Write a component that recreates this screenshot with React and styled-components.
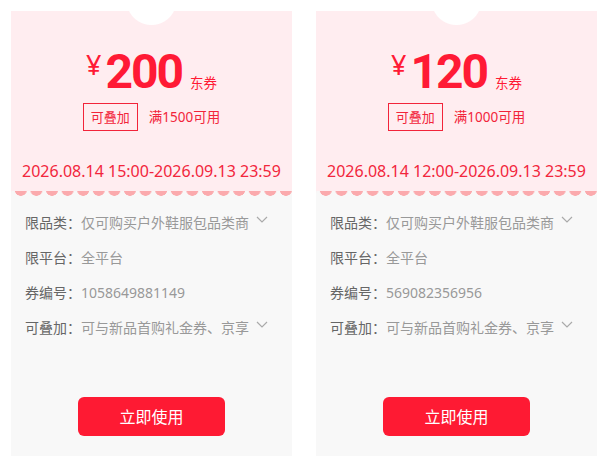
import React from "react";
import styled, { createGlobalStyle } from "styled-components";

const Global = createGlobalStyle`
  html, body { margin: 0; padding: 0; background: #fff; overflow: hidden; }
  body { font-family: "Noto Sans", "Noto Sans CJK SC", sans-serif; }
`;

const Page = styled.div`
  display: flex;
  gap: 24px;
  padding: 11px 0 0 11px;
  width: 600px;
  height: 456px;
  box-sizing: border-box;
`;

const Card = styled.div`
  width: 281px;
  flex: none;
  display: flex;
  flex-direction: column;
  height: 445px;
  background: #f8f8f8;
`;

const Header = styled.div`
  height: 180px;
  box-sizing: border-box;
  padding: 37px 0 10px;
  display: flex;
  flex-direction: column;
  align-items: center;
  background: radial-gradient(circle at 50% -11px, #fff 24.5px, #ffedf0 25.5px);
`;

const AmountRow = styled.div`
  display: flex;
  align-items: baseline;
  justify-content: center;
  height: 48px;
  color: #ff1a35;
`;

const Yen = styled.span`
  align-self: flex-start;
  margin-top: 3px;
  margin-right: 4px;
  font-family: "Noto Sans", sans-serif;
  font-size: 27px;
  line-height: 27px;
`;

const Amount = styled.span`
  font-family: Roboto, "Liberation Sans", sans-serif;
  font-weight: 700;
  font-size: 48px;
  line-height: 48px;
  letter-spacing: -2px;
`;

const Unit = styled.span`
  margin-left: 8px;
  font-family: "Noto Sans CJK SC", sans-serif;
  font-size: 13.5px;
`;

const TagRow = styled.div`
  display: flex;
  align-items: center;
  margin-top: 7px;
  gap: 11px;
`;

const Tag = styled.span`
  border: 1px solid #f2243a;
  color: #f2243a;
  font-size: 13px;
  line-height: 26px;
  padding: 0 7px;
  font-family: "Noto Sans CJK SC", sans-serif;
`;

const Cond = styled.span`
  color: #f2243a;
  font-size: 13.5px;
  line-height: 26px;
`;

const DateText = styled.div`
  margin-top: auto;
  color: #f2263c;
  font-size: 16px;
  line-height: 20px;
  white-space: nowrap;
`;

const Scallop = styled.div`
  height: 5px;
  background-color: #f8f8f8;
  background-image: radial-gradient(ellipse 6px 5px at 50% 0, #fbaaad 90%, transparent 100%);
  background-size: 15.6px 5px;
  background-repeat: repeat-x;
  background-position: 2px 0;
`;

const Body = styled.div`
  display: flex;
  flex-direction: column;
  padding: 17px 0 0 14px;
  gap: 15px;
`;

const Row = styled.div`
  display: flex;
  align-items: flex-start;
  font-size: 14px;
  line-height: 20px;
  white-space: nowrap;
`;

const Label = styled.span`
  color: #666;
`;

const Value = styled.span`
  color: #999;
`;

const Chevron = styled.svg`
  margin-left: 7px;
  margin-top: 3px;
  flex: none;
`;

const Button = styled.button`
  align-self: center;
  margin-top: 59px;
  width: 147px;
  height: 39px;
  border: none;
  border-radius: 6px;
  background: #fe1a33;
  color: #fff;
  font-family: "Noto Sans CJK SC", sans-serif;
  font-size: 16px;
  line-height: 39px;
  padding: 0;
`;

const Down = () => (
  <Chevron width="12" height="8" viewBox="0 0 12 8">
    <polyline points="1,1 6,6 11,1" fill="none" stroke="#aaa" strokeWidth="1.2" />
  </Chevron>
);

const coupons = [
  { amount: "200", cond: "满1500可用", date: "2026.08.14 15:00-2026.09.13 23:59", no: "1058649881149" },
  { amount: "120", cond: "满1000可用", date: "2026.08.14 12:00-2026.09.13 23:59", no: "569082356956" },
];

export default function App() {
  return (
    <>
      <Global />
      <Page>
        {coupons.map((c) => (
          <Card key={c.no}>
            <Header>
              <AmountRow>
                <Yen>¥</Yen>
                <Amount>{c.amount}</Amount>
                <Unit>东券</Unit>
              </AmountRow>
              <TagRow>
                <Tag>可叠加</Tag>
                <Cond>{c.cond}</Cond>
              </TagRow>
              <DateText>{c.date}</DateText>
            </Header>
            <Scallop />
            <Body>
              <Row>
                <Label>限品类：</Label>
                <Value>仅可购买户外鞋服包品类商</Value>
                <Down />
              </Row>
              <Row>
                <Label>限平台：</Label>
                <Value>全平台</Value>
              </Row>
              <Row>
                <Label>券编号：</Label>
                <Value>{c.no}</Value>
              </Row>
              <Row>
                <Label>可叠加：</Label>
                <Value>可与新品首购礼金券、京享</Value>
                <Down />
              </Row>
            </Body>
            <Button>立即使用</Button>
          </Card>
        ))}
      </Page>
    </>
  );
}
